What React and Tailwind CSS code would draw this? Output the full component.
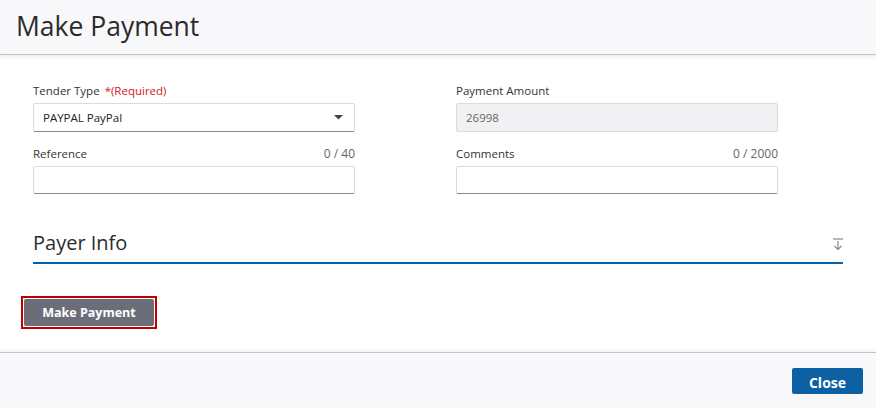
import React from "react";

function Field({ label, count, children, required }) {
  return (
    <div className="flex flex-col">
      <div className="flex justify-between items-end h-4 mb-[5px] text-[11.5px] leading-4">
        <span className="text-[#333] translate-y-[1px]">
          {label}
          {required && <span className="text-[#d9141d] ml-[5px]">*(Required)</span>}
        </span>
        {count && <span className="text-[#666] text-[12px] translate-y-[1px]">{count}</span>}
      </div>
      {children}
    </div>
  );
}

export default function App() {
  return (
    <div className="w-[876px] h-[408px] bg-white flex flex-col overflow-hidden" style={{ fontFamily: '"Open Sans", "Noto Sans", sans-serif' }}>
      <div className="h-[55px] shrink-0 bg-[#f8f8fa] border-b border-[#c4c4ca] shadow-[0_2px_4px_rgba(0,0,0,0.08)] flex items-center px-4 relative z-10">
        <h1 className="text-[26.5px] leading-none text-[#2b2b2b] mt-[-1px]">Make Payment</h1>
      </div>
      <div className="flex-1 flex flex-col px-[33px] pt-[27px]">
        <div className="flex gap-[101px]">
          <div className="w-[322px] flex flex-col gap-[13px]">
            <Field label="Tender Type" required>
              <div className="h-[29px] border border-[#dcdce0] border-b-[#8a8a8e] rounded-[2px] flex items-center justify-between pl-[9px] pr-[11px] text-[11.5px] text-[#222]">
                <span>PAYPAL PayPal</span>
                <svg width="9" height="5" viewBox="0 0 9 5"><path d="M0 0h9L4.5 4.5z" fill="#444" /></svg>
              </div>
            </Field>
            <Field label="Reference" count="0 / 40">
              <div className="h-[28px] border border-[#dcdce0] border-b-[#8a8a8e] rounded-[2px] bg-white" />
            </Field>
          </div>
          <div className="w-[322px] flex flex-col gap-[13px]">
            <Field label="Payment Amount">
              <div className="h-[29px] border border-[#dcdce0] rounded-[2px] bg-[#f1f1f4] flex items-center pl-[9px] text-[11.5px] text-[#666]">
                26998
              </div>
            </Field>
            <Field label="Comments" count="0 / 2000">
              <div className="h-[28px] border border-[#dcdce0] border-b-[#8a8a8e] rounded-[2px] bg-white" />
            </Field>
          </div>
        </div>
        <div className="mt-[36px] flex items-center justify-between border-b-2 border-[#0b61a4] pb-[4px] h-[34px]">
          <span className="text-[20px] leading-6 text-[#2b2b2b] mt-[-2px]">Payer Info</span>
          <svg width="12" height="13" viewBox="0 0 12 13" className="mr-[-1px] mt-[1px]">
            <path d="M1 1h10" stroke="#888" strokeWidth="1.2" />
            <path d="M6 3v8.5M2.5 8l3.5 3.5 3.5-3.5" stroke="#888" strokeWidth="1.2" fill="none" />
          </svg>
        </div>
        <div className="mt-[32px] ml-[-12px]">
          <div className="inline-flex border-2 border-[#c00000] p-[1px]">
            <button className="w-[130px] h-[27px] bg-[#6b6e79] rounded-[2px] text-white text-[12.5px] font-bold flex items-center justify-center pt-[2px]">
              Make Payment
            </button>
          </div>
        </div>
      </div>
      <div className="h-[56px] shrink-0 bg-[#f8f8fa] border-t border-[#c4c4ca] shadow-[0_-2px_4px_rgba(0,0,0,0.06)] flex items-center justify-end pr-[13px] pt-[1px]">
        <button className="w-[71px] h-[26px] bg-[#0b61a4] rounded-[2px] text-white text-[14px] font-bold leading-none pt-[4px]">Close</button>
      </div>
    </div>
  );
}
